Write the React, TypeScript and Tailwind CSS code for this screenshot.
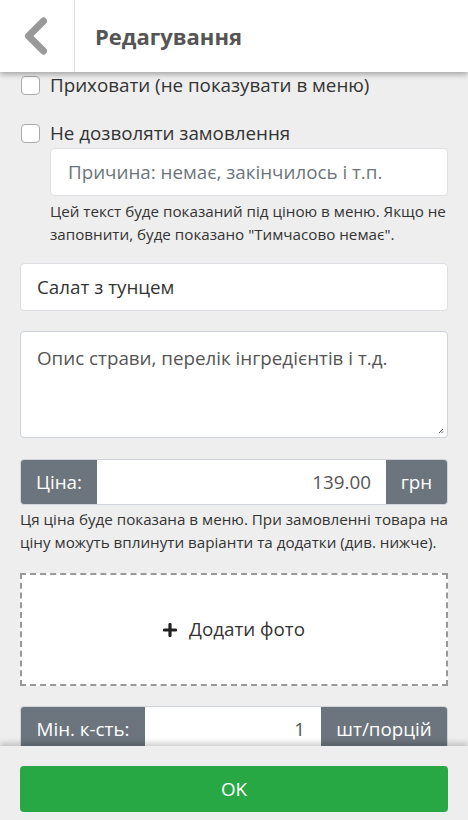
import React from "react";

const font = { fontFamily: '"Open Sans", "Noto Sans", sans-serif' };

const Checkbox = ({ label }: { label: string }) => (
  <label className="flex items-center h-[27px]">
    <span className="ml-[1px] w-[19px] h-[19px] shrink-0 rounded-[4px] border border-[#a9a9a9] bg-white" />
    <span className="ml-[10px] text-[18.8px] text-[#333]">{label}</span>
  </label>
);

const Addon = ({ children, className = "" }: { children: React.ReactNode; className?: string }) => (
  <div className={`flex items-center justify-center bg-[#6c757d] text-white text-[18.8px] ${className}`}>
    {children}
  </div>
);

const App = () => {
  return (
    <div className="w-[468px] h-[820px] flex flex-col overflow-hidden bg-[#eeeeee]" style={font}>
      {/* header */}
      <div className="relative z-10 h-[72px] shrink-0 flex bg-white shadow-[0_2px_6px_rgba(0,0,0,0.35)]">
        <div className="w-[75px] flex items-center justify-center border-r border-[#ddd]">
          <svg width="26" height="38" viewBox="0 0 26 38" className="-ml-[2px]">
            <path d="M20.5 4 L5.5 19 L20.5 34" fill="none" stroke="#999" strokeWidth="7" strokeLinecap="round" strokeLinejoin="round" />
          </svg>
        </div>
        <div className="flex items-center pl-[20px] text-[22px] font-bold text-[#555]">Редагування</div>
      </div>

      {/* content */}
      <div className="flex-1 overflow-hidden px-[20px]">
        <Checkbox label="Приховати (не показувати в меню)" />
        <div className="mt-[21px]">
          <Checkbox label="Не дозволяти замовлення" />
        </div>
        <div className="ml-[30px] mt-[1px]">
          <div className="h-[48px] flex items-center px-[17px] bg-white border border-[#dcdfe3] rounded-[4px] text-[18.8px] text-[#6c757d]">
            Причина: немає, закінчилось і т.п.
          </div>
          <p className="mt-[4px] text-[15.2px] leading-[23px] text-[#333]">
            Цей текст буде показаний під ціною в меню. Якщо не заповнити, буде показано "Тимчасово немає".
          </p>
        </div>

        <div className="mt-[17px] h-[48px] flex items-center px-[16px] bg-white border border-[#dcdfe3] rounded-[4px] text-[18.8px] text-[#333]">
          Салат з тунцем
        </div>

        <div className="relative mt-[20px] h-[107px] px-[16px] pt-[12px] bg-white border border-[#ced4da] rounded-[4px] text-[18.8px] text-[#555]">
          Опис страви, перелік інгредієнтів і т.д.
          <svg width="6" height="6" viewBox="0 0 6 6" className="absolute right-[3px] bottom-[3px]">
            <path d="M1 5 L5 1 M3.5 5 L5 3.5" stroke="#555" strokeWidth="1" />
          </svg>
        </div>

        <div className="mt-[21px] h-[46px] flex rounded-[4px] overflow-hidden border border-[#ced4da]">
          <Addon className="w-[76px]">Ціна:</Addon>
          <div className="flex-1 bg-white flex items-center justify-end pr-[15px] text-[18.8px] text-[#555]">139.00</div>
          <Addon className="w-[61px]">грн</Addon>
        </div>
        <p className="mt-[3px] text-[15.2px] leading-[23px] text-[#333]">
          Ця ціна буде показана в меню. При замовленні товара на ціну можуть вплинути варіанти та додатки (див. нижче).
        </p>

        <div className="mt-[19px] h-[113px] flex items-center justify-center bg-white border-2 border-dashed border-[#999]">
          <svg width="14" height="14" viewBox="0 0 14 14">
            <path d="M7 1.5 V12.5 M1.5 7 H12.5" stroke="#222" strokeWidth="3.2" strokeLinecap="round" />
          </svg>
          <span className="ml-[12px] text-[18.8px] text-[#333]">Додати фото</span>
        </div>

        <div className="mt-[20px] h-[46px] flex rounded-[4px] overflow-hidden border border-[#ced4da]">
          <Addon className="w-[124px]">Мін. к-сть:</Addon>
          <div className="flex-1 bg-white flex items-center justify-end pr-[16px] text-[18.8px] text-[#555]">1</div>
          <Addon className="w-[126px]">шт/порцій</Addon>
        </div>
      </div>

      {/* footer */}
      <div className="relative z-10 h-[74px] shrink-0 bg-[#eeeeee] px-[20px] pt-[20px] shadow-[0_-3px_6px_rgba(0,0,0,0.2)]">
        <button className="w-full h-[46px] rounded-[4px] bg-[#28a745] text-white text-[18.8px]">OK</button>
      </div>
    </div>
  );
};

export default App;
